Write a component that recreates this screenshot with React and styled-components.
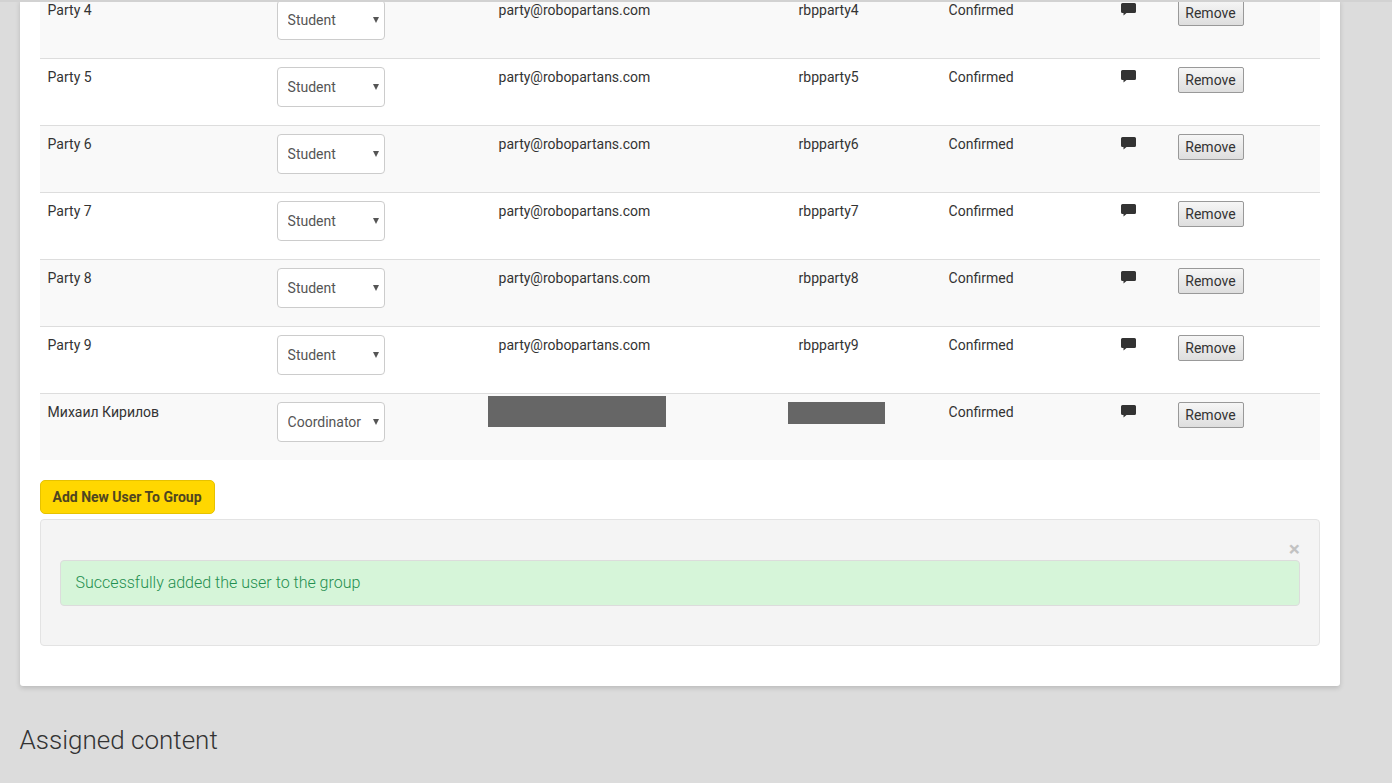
import React from "react";
import styled, { createGlobalStyle } from "styled-components";

const Global = createGlobalStyle`
  html, body { margin: 0; padding: 0; height: 100%; overflow: hidden; background: #dcdcdc; }
  body { font-family: Roboto, "Liberation Sans", sans-serif; font-size: 14px; color: #333; }
`;

const Viewport = styled.div`
  height: 783px;
  overflow: hidden;
  position: relative;
  box-sizing: border-box;
  padding: 0 20px;
`;

const TopEdge = styled.div`
  position: absolute;
  top: 0;
  left: 0;
  right: 0;
  height: 2px;
  background: #d2d2d2;
  z-index: 2;
`;

const Card = styled.div`
  width: 1320px;
  height: 686px;
  box-sizing: border-box;
  background: #fff;
  border-radius: 0 0 3px 3px;
  box-shadow: 0 2px 5px rgba(0, 0, 0, 0.16);
  padding: 0 20px;
  overflow: hidden;
`;

const Table = styled.div`
  margin-top: -9px;
  position: relative;
`;

const Row = styled.div`
  display: grid;
  grid-template-columns: 229px 222px 300px 150px 172px 57px 150px;
  height: 67px;
  box-sizing: border-box;
  border-top: 1px solid #ddd;
  background: ${(p) => (p.$shaded ? "#f9f9f9" : "#fff")};
`;

const Cell = styled.div`
  padding: 8px 8px 8px 7.6px;
  line-height: 20px;
  color: #333;
`;

const SelectWrap = styled.div`
  position: relative;
  width: 108px;
  height: 40px;
  margin-left: 0.4px;

  &::after {
    content: "";
    position: absolute;
    top: 17px;
    right: 5.5px;
    border-left: 3.5px solid transparent;
    border-right: 3.5px solid transparent;
    border-top: 6px solid #555;
    pointer-events: none;
  }
`;

const RoleSelect = styled.select`
  display: block;
  width: 108px;
  height: 40px;
  box-sizing: border-box;
  padding: 6px 6px 6px 9.6px;
  border: 1px solid #ccc;
  border-radius: 4px;
  background: #fff;
  color: #555;
  font-family: Roboto, "Liberation Sans", sans-serif;
  font-size: 14px;
  appearance: none;
`;

const IconLink = styled.span`
  display: block;
  width: 16px;
  height: 14px;
  margin-top: 2px;
  margin-left: 0.4px;
  color: #333;
`;

const RemoveButton = styled.button`
  display: block;
  width: 66px;
  height: 26px;
  margin-left: 0.4px;
  padding: 0 1px 0 0;
  box-sizing: border-box;
  border: 1px solid #999;
  border-radius: 2px;
  background: linear-gradient(#f6f6f6, #dedede);
  color: #333;
  font-family: Roboto, "Liberation Sans", sans-serif;
  font-size: 14px;
`;

const Redaction = styled.div`
  position: absolute;
  background: #666;
  left: ${(p) => p.$x}px;
  top: ${(p) => p.$y}px;
  width: ${(p) => p.$w}px;
  height: ${(p) => p.$h}px;
`;

const AddButton = styled.button`
  display: block;
  width: 175px;
  height: 34px;
  margin-top: 20px;
  padding: 0 1px 0 0;
  border: 1px solid #e6c200;
  border-radius: 5px;
  background: #ffd700;
  color: #4f4520;
  font-family: Roboto, "Liberation Sans", sans-serif;
  font-size: 14px;
  font-weight: 700;
`;

const Well = styled.div`
  position: relative;
  height: 127px;
  margin-top: 5px;
  box-sizing: border-box;
  padding: 40px 19px 0;
  background: #f4f4f4;
  border: 1px solid #e3e3e3;
  border-radius: 4px;
`;

const Close = styled.span`
  position: absolute;
  top: 19px;
  right: 19px;
  font-size: 21px;
  line-height: 21px;
  font-weight: 700;
  color: #000;
  opacity: 0.2;
`;

const Alert = styled.div`
  height: 46px;
  box-sizing: border-box;
  padding: 0 14.6px;
  background: #d6f5d9;
  border: 1px solid #dcdcdc;
  border-radius: 4px;
  color: #1f8f4f;
  font-size: 16px;
  font-weight: 300;
  line-height: 44px;
`;

const Heading = styled.h2`
  margin: 37px 0 0 -0.4px;
  font-size: 26px;
  line-height: 34px;
  font-weight: 300;
  color: #333;
`;

const Bubble = () => (
  <svg width="16" height="14" viewBox="0 0 16 14" fill="currentColor">
    <path d="M1.5 0h12A1.5 1.5 0 0 1 15 1.500v7A1.500 1.500 0 0 1 13.500 10H5.500L2.500 12.600V10h-1A1.500 1.500 0 0 1 0 8.500v-7A1.500 1.500 0 0 1 1.500 0z" />
  </svg>
);

const rows = [4, 5, 6, 7, 8, 9].map((n) => ({
  name: `Party ${n}`,
  role: "Student",
  email: "party@robopartans.com",
  user: `rbpparty${n}`,
}));
rows.push({ name: "Михаил Кирилов", role: "Coordinator", email: "", user: "" });

export default function App() {
  return (
    <>
      <Global />
      <Viewport>
        <TopEdge />
        <Card>
          <Table>
            {rows.map((r, i) => (
              <Row key={r.name} $shaded={i % 2 === 0}>
                <Cell>{r.name}</Cell>
                <Cell>
                  <SelectWrap>
                    <RoleSelect defaultValue={r.role}>
                      <option>Student</option>
                      <option>Coordinator</option>
                    </RoleSelect>
                  </SelectWrap>
                </Cell>
                <Cell>{r.email}</Cell>
                <Cell>{r.user}</Cell>
                <Cell>Confirmed</Cell>
                <Cell>
                  <IconLink>
                    <Bubble />
                  </IconLink>
                </Cell>
                <Cell>
                  <RemoveButton>Remove</RemoveButton>
                </Cell>
              </Row>
            ))}
            <Redaction $x={448} $y={405} $w={178} $h={31} />
            <Redaction $x={748} $y={411} $w={97} $h={22} />
          </Table>
          <AddButton>Add New User To Group</AddButton>
          <Well>
            <Close>×</Close>
            <Alert>Successfully added the user to the group</Alert>
          </Well>
        </Card>
        <Heading>Assigned content</Heading>
      </Viewport>
    </>
  );
}
